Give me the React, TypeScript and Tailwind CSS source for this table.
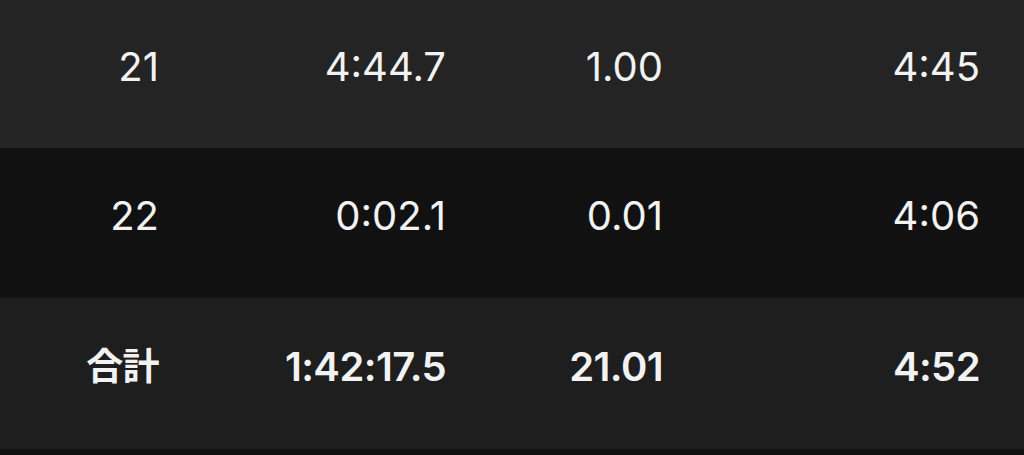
const rows = [
  { lap: '21', time: '4:44.7', dist: '1.00', pace: '4:45', bg: 'bg-[#242424]', h: 'h-[148px]' },
  { lap: '22', time: '0:02.1', dist: '0.01', pace: '4:06', bg: 'bg-[#111111]', h: 'h-[150px]' },
]

export default function App() {
  return (
    <div
      className="w-[1024px] h-[455px] bg-[#111111] text-[#f2f2f2] overflow-hidden"
      style={{ fontFamily: 'Inter, "Noto Sans CJK JP", sans-serif' }}
    >
      {rows.map((r) => (
        <div
          key={r.lap}
          className={`grid grid-cols-[159px_287px_217px_317px] items-center pb-[14px] text-[40px] font-normal ${r.bg} ${r.h}`}
        >
          <div className="text-right">{r.lap}</div>
          <div className="text-right">{r.time}</div>
          <div className="text-right">{r.dist}</div>
          <div className="text-right">{r.pace}</div>
        </div>
      ))}
      {/* total row */}
      <div className="grid grid-cols-[159px_287px_217px_317px] items-center pb-[14px] text-[40px] font-semibold tracking-[-0.015em] bg-[#1e1e1e] h-[151px]">
        <div className="text-right text-[37px]">合計</div>
        <div className="text-right">1:42:17.5</div>
        <div className="text-right">21.01</div>
        <div className="text-right">4:52</div>
      </div>
    </div>
  )
}
